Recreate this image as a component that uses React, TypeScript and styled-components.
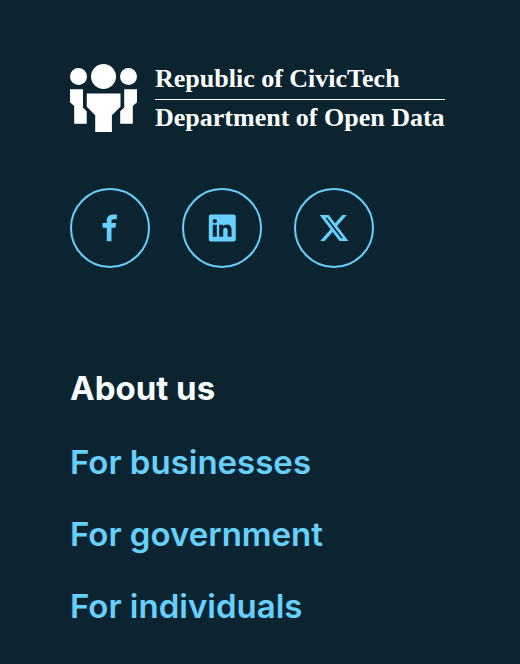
import React from "react";
import styled, { createGlobalStyle } from "styled-components";

const GlobalStyle = createGlobalStyle`
  *, *::before, *::after {
    box-sizing: border-box;
  }
  body {
    margin: 0;
    background: #0c2430;
    color: #f8fcff;
    font-family: Inter, "Open Sans", sans-serif;
  }
`;

const Footer = styled.footer`
  padding: 64px 70px 32px;
`;

const Brand = styled.div`
  display: flex;
  align-items: flex-start;
  gap: 18px;
  color: #ffffff;
`;

const Emblem = styled.svg`
  flex: none;
  width: 67px;
  height: 68px;
  fill: currentColor;
`;

const BrandText = styled.div`
  font-family: "Liberation Serif", "Times New Roman", serif;
  font-size: 26px;
  font-weight: 700;
  line-height: 30px;
  white-space: nowrap;
`;

const BrandLine = styled.div`
  & + & {
    margin-top: 5px;
    padding-top: 3px;
    border-top: 1px solid currentColor;
  }
`;

const SocialList = styled.ul`
  display: flex;
  flex-wrap: wrap;
  gap: 32px;
  margin: 55px 0 0;
  padding: 0;
  list-style: none;
`;

const SocialLink = styled.a`
  display: flex;
  align-items: center;
  justify-content: center;
  width: 80px;
  height: 80px;
  border: 2px solid #66d1ff;
  border-radius: 50%;
  color: #66d1ff;
`;

const SocialIcon = styled.svg<{ $size: number }>`
  width: ${({ $size }) => $size}px;
  height: ${({ $size }) => $size}px;
  fill: currentColor;
  fill-rule: evenodd;
`;

const Section = styled.nav`
  margin-top: 100px;
`;

const Heading = styled.h2`
  margin: 0;
  font-size: 33px;
  font-weight: 700;
  line-height: 40px;
`;

const LinkList = styled.ul`
  display: flex;
  flex-direction: column;
  gap: 32px;
  margin: 34px 0 0;
  padding: 0;
  list-style: none;
`;

const FooterLink = styled.a`
  display: block;
  width: fit-content;
  color: #66d1ff;
  font-size: 33px;
  font-weight: 600;
  line-height: 40px;
  text-decoration: none;
`;

const socials = [
  {
    name: "Facebook",
    size: 28,
    viewBox: "0 0 28 28",
    path: "M10.8 27.2V13.8H6.6V9h4.2V6.9C10.8 2.8 13 .6 17 .6h3.8v4.7h-2.6c-2 0-2.7.7-2.7 2.3V9H20l-.5 4.8h-4v13.4z",
  },
  {
    name: "LinkedIn",
    size: 28,
    viewBox: "0 0 28 28",
    path: "M2.8.6h23a2 2 0 0 1 2 2v22.9a2 2 0 0 1-2 2h-23a2 2 0 0 1-2-2V2.600a2 2 0 0 1 2-2zM6.800 4.900a2.200 2.200 0 1 0 0 4.400a2.200 2.200 0 1 0 0-4.400zM4.800 10.700v12.100h4V10.700zM11.200 10.700v12.100h4v-6.200c0-1.800.7-2.800 2.200-2.800s2.200 1 2.200 2.800v6.200h4v-7.100c0-3.400-1.700-5.300-4.700-5.300-1.700 0-3 .7-3.800 1.900v-1.600z",
  },
  {
    name: "X",
    size: 32,
    viewBox: "0 0 512 512",
    path: "M389.200 48h70.600L305.600 224.200 487 464H345L233.700 318.600 106.500 464H35.800L200.700 275.500 26.800 48H172.400L272.900 180.900zM368 420h32L148 92h-32z",
  },
];

const links = ["For businesses", "For government", "For individuals"];

export default function App() {
  return (
    <>
      <GlobalStyle />
      <Footer>
        <Brand>
          <Emblem viewBox="0 0 67 68" aria-hidden="true">
            <circle cx="8.5" cy="12.5" r="8.5" />
            <circle cx="33.5" cy="12.5" r="12.5" />
            <circle cx="58.5" cy="12.5" r="8.5" />
            <path d="M0 25.3h13v18.2l3.7 3.7v12.5H4.2V42L0 38.2z" />
            <path d="M67 25.3H54.2v18.2l-4 3.7v12.5h12.6V42l4.2-3.8z" />
            <path d="M16.8 29.5h33.7v13.3l-8.6 8.4V68H25.2V51.2l-8.4-8.4z" />
          </Emblem>
          <BrandText>
            <BrandLine>Republic of CivicTech</BrandLine>
            <BrandLine>Department of Open Data</BrandLine>
          </BrandText>
        </Brand>
        <SocialList>
          {socials.map(({ name, size, viewBox, path }) => (
            <li key={name}>
              <SocialLink href="#" aria-label={name}>
                <SocialIcon $size={size} viewBox={viewBox} aria-hidden="true">
                  <path d={path} />
                </SocialIcon>
              </SocialLink>
            </li>
          ))}
        </SocialList>
        <Section aria-labelledby="about-heading">
          <Heading id="about-heading">About us</Heading>
          <LinkList>
            {links.map((label) => (
              <li key={label}>
                <FooterLink href="#">{label}</FooterLink>
              </li>
            ))}
          </LinkList>
        </Section>
      </Footer>
    </>
  );
}
